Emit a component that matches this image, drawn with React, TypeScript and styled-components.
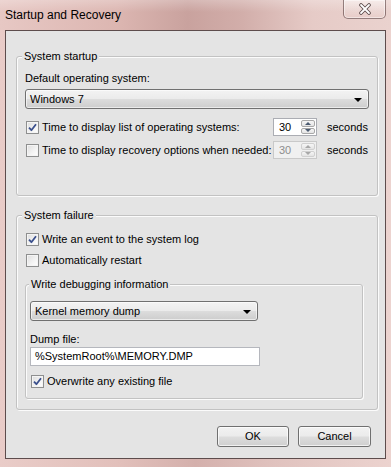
import React from "react";
import styled, { createGlobalStyle } from "styled-components";

const FONT = `"Liberation Sans", Arial, sans-serif`;
const CLIENT_BG = "#e4e4e4";

const Global = createGlobalStyle`
  html, body { margin: 0; padding: 0; }
  body {
    width: 391px;
    height: 467px;
    overflow: hidden;
    font-family: ${FONT};
    font-size: 11px;
    color: #000;
  }
`;

const Window = styled.div`
  width: 391px;
  height: 467px;
  box-sizing: border-box;
  display: flex;
  flex-direction: column;
  padding-bottom: 8px;
  background: linear-gradient(90deg, #e9ccc8 0%, #e2c0bb 30%, #d4b0ac 50%, #e0c2be 70%, #ecd3cf 100%);
`;

const TitleBar = styled.div`
  height: 30px;
  display: flex;
  align-items: flex-start;
  padding-left: 5px;
  background:
    linear-gradient(180deg, rgba(255, 255, 255, 0.25) 0%, rgba(255, 255, 255, 0) 40%),
    linear-gradient(90deg, #e7c8c4 0%, #dcb6b1 30%, #c9a29e 48%, #d2aeaa 62%, #e6cbc7 80%, #ead2ce 100%);
`;

const Title = styled.span`
  margin-top: 7px;
  line-height: 16px;
  font-size: 12px;
  color: #000;
`;

const CloseButton = styled.div`
  margin-left: auto;
  margin-right: 5px;
  width: 43px;
  height: 19px;
  box-sizing: border-box;
  border: 1px solid rgba(70, 40, 40, 0.55);
  border-top: none;
  border-radius: 0 0 5px 5px;
  background: linear-gradient(180deg, rgba(255, 255, 255, 0.45) 0%, rgba(255, 255, 255, 0.2) 50%, rgba(230, 200, 196, 0.4) 100%);
  box-shadow: inset 0 0 0 1px rgba(255, 255, 255, 0.45);
  display: flex;
  align-items: center;
  justify-content: center;
`;

const Client = styled.div`
  flex: 1;
  margin: 0 5px;
  border: 1px solid #5d4c4c;
  background: ${CLIENT_BG};
  display: flex;
  flex-direction: column;
  padding: 25px 7px 0 10px;
`;

const Group = styled.div<{ $pt: number; $pb: number; $pl: number; $mt?: number; $w?: number }>`
  position: relative;
  border: 1px solid #c2c2c2;
  border-radius: 3px;
  box-shadow: inset 1px 1px 0 #fbfbfb, 1px 1px 0 #fbfbfb;
  padding: ${(p) => p.$pt}px 8px ${(p) => p.$pb}px ${(p) => p.$pl}px;
  margin-top: ${(p) => p.$mt ?? 0}px;
  ${(p) => (p.$w ? `width: ${p.$w}px; box-sizing: border-box;` : "")}
  display: flex;
  flex-direction: column;
`;

const Legend = styled.span<{ $left: number }>`
  position: absolute;
  top: -8px;
  left: ${(p) => p.$left}px;
  padding: 0 2px;
  line-height: 15px;
  background: ${CLIENT_BG};
`;

const Label = styled.div<{ $mt?: number }>`
  line-height: 15px;
  margin-top: ${(p) => p.$mt ?? 0}px;
`;

const Combo = styled.div<{ $w?: number; $mt?: number }>`
  height: 20px;
  box-sizing: border-box;
  ${(p) => (p.$w ? `width: ${p.$w}px;` : "")}
  margin-top: ${(p) => p.$mt ?? 0}px;
  border: 1px solid #707070;
  border-radius: 3px;
  background: linear-gradient(180deg, #f3f3f3 0%, #ebebeb 48%, #dcdcdc 52%, #cdcdcd 100%);
  box-shadow: inset 0 0 0 1px rgba(255, 255, 255, 0.6);
  display: flex;
  align-items: center;
  padding: 0 6px 0 4px;
  line-height: 16px;
`;

const ComboText = styled.span`
  flex: 1;
`;

const Arrow = styled.span`
  width: 0;
  height: 0;
  border-left: 4px solid transparent;
  border-right: 4px solid transparent;
  border-top: 4px solid #000;
  margin-top: 2px;
`;

const TimeRow = styled.div<{ $mt: number }>`
  display: grid;
  grid-template-columns: minmax(0, 1fr) 44px 42px;
  column-gap: 10px;
  align-items: center;
  height: 18px;
  margin-top: ${(p) => p.$mt}px;
`;

const CheckRow = styled.label<{ $mt: number }>`
  display: flex;
  align-items: center;
  gap: 3px;
  height: 16px;
  margin-top: ${(p) => p.$mt}px;
  line-height: 15px;
  white-space: nowrap;
  min-width: 0;
`;

const Box = styled.span`
  width: 13px;
  height: 13px;
  box-sizing: border-box;
  margin-left: 1px;
  flex: none;
  border: 1px solid #8e8f8f;
  background: linear-gradient(135deg, #dcdcdc 0%, #f4f4f4 60%, #ffffff 100%);
  box-shadow: inset 0 0 0 1px #f4f4f4;
  display: flex;
  align-items: center;
  justify-content: center;
`;

const Spinner = styled.div<{ $disabled?: boolean }>`
  display: flex;
  height: 18px;
  box-sizing: border-box;
  border: 1px solid ${(p) => (p.$disabled ? "#c9c9c9" : "#abadb3")};
  background: ${(p) => (p.$disabled ? "#f0f0f0" : "#fff")};
  color: ${(p) => (p.$disabled ? "#8d8d8d" : "#000")};
`;

const SpinValue = styled.span`
  flex: 1;
  padding-left: 5px;
  line-height: 16px;
`;

const SpinButtons = styled.div`
  width: 15px;
  display: flex;
  flex-direction: column;
  gap: 1px;
  padding: 1px 1px 1px 0;
  box-sizing: border-box;
`;

const SpinBtn = styled.div<{ $disabled?: boolean }>`
  flex: 1;
  border: 1px solid ${(p) => (p.$disabled ? "#d0d0d0" : "#a8a8a8")};
  border-radius: 2px;
  background: linear-gradient(180deg, #f6f6f6 0%, #e4e4e4 100%);
  display: flex;
  align-items: center;
  justify-content: center;
`;

const Tri = styled.span<{ $up?: boolean; $disabled?: boolean }>`
  width: 0;
  height: 0;
  border-left: 3px solid transparent;
  border-right: 3px solid transparent;
  ${(p) =>
    p.$up
      ? `border-bottom: 3px solid ${p.$disabled ? "#a8a8a8" : "#4a5a70"};`
      : `border-top: 3px solid ${p.$disabled ? "#a8a8a8" : "#4a5a70"};`}
`;

const Seconds = styled.span`
  line-height: 15px;
  white-space: nowrap;
`;

const TextBox = styled.div`
  width: 230px;
  height: 19px;
  box-sizing: border-box;
  border: 1px solid #b5b7bd;
  background: #fff;
  padding-left: 4px;
  line-height: 17px;
`;

const ButtonRow = styled.div`
  display: flex;
  justify-content: flex-end;
  gap: 9px;
  margin-top: 16px;
  padding-right: 7px;
`;

const Button = styled.div<{ $w: number }>`
  width: ${(p) => p.$w}px;
  height: 21px;
  box-sizing: border-box;
  border: 1px solid #707070;
  border-radius: 3px;
  background: linear-gradient(180deg, #f2f2f2 0%, #ebebeb 48%, #dddddd 52%, #cfcfcf 100%);
  box-shadow: inset 0 0 0 1px rgba(255, 255, 255, 0.7);
  display: flex;
  align-items: center;
  justify-content: center;
  line-height: 15px;
`;

const Check = ({ checked }: { checked?: boolean }) => (
  <Box>
    {checked && (
      <svg width="9" height="9" viewBox="0 0 9 9">
        <path d="M1 4.6 L3.4 7.2 L8 1.2" fill="none" stroke="#3a4f8c" strokeWidth="1.8" strokeLinejoin="round" />
      </svg>
    )}
  </Box>
);

const Spin = ({ value, disabled }: { value: string; disabled?: boolean }) => (
  <Spinner $disabled={disabled}>
    <SpinValue>{value}</SpinValue>
    <SpinButtons>
      <SpinBtn $disabled={disabled}>
        <Tri $up $disabled={disabled} />
      </SpinBtn>
      <SpinBtn $disabled={disabled}>
        <Tri $disabled={disabled} />
      </SpinBtn>
    </SpinButtons>
  </Spinner>
);

export default function App() {
  return (
    <>
      <Global />
      <Window>
        <TitleBar>
          <Title>Startup and Recovery</Title>
          <CloseButton>
            <svg width="14" height="12" viewBox="0 0 14 12">
              <path d="M3 2 L11 10 M11 2 L3 10" stroke="#5a4a4a" strokeWidth="3.6" strokeLinecap="round" />
              <path d="M3 2 L11 10 M11 2 L3 10" stroke="#ffffff" strokeWidth="1.8" strokeLinecap="round" />
            </svg>
          </CloseButton>
        </TitleBar>
        <Client>
          <Group $pt={14} $pb={36} $pl={8}>
            <Legend $left={5}>System startup</Legend>
            <Label>Default operating system:</Label>
            <Combo $mt={3}>
              <ComboText>Windows 7</ComboText>
              <Arrow />
            </Combo>
            <TimeRow $mt={9}>
              <CheckRow $mt={0}>
                <Check checked />
                Time to display list of operating systems:
              </CheckRow>
              <Spin value="30" />
              <Seconds>seconds</Seconds>
            </TimeRow>
            <TimeRow $mt={5}>
              <CheckRow $mt={0}>
                <Check />
                Time to display recovery options when needed:
              </CheckRow>
              <Spin value="30" disabled />
              <Seconds>seconds</Seconds>
            </TimeRow>
          </Group>

          <Group $pt={15} $pb={10} $pl={8} $mt={19}>
            <Legend $left={5}>System failure</Legend>
            <CheckRow $mt={0}>
              <Check checked />
              Write an event to the system log
            </CheckRow>
            <CheckRow $mt={5}>
              <Check />
              Automatically restart
            </CheckRow>
            <Group $pt={16} $pb={9} $pl={4} $mt={16} $w={338}>
              <Legend $left={3}>Write debugging information</Legend>
              <Combo $w={228}>
                <ComboText>Kernel memory dump</ComboText>
                <Arrow />
              </Combo>
              <Label $mt={11}>Dump file:</Label>
              <TextBox>%SystemRoot%\MEMORY.DMP</TextBox>
              <CheckRow $mt={7}>
                <Check checked />
                Overwrite any existing file
              </CheckRow>
            </Group>
          </Group>

          <ButtonRow>
            <Button $w={72}>OK</Button>
            <Button $w={73}>Cancel</Button>
          </ButtonRow>
        </Client>
      </Window>
    </>
  );
}
